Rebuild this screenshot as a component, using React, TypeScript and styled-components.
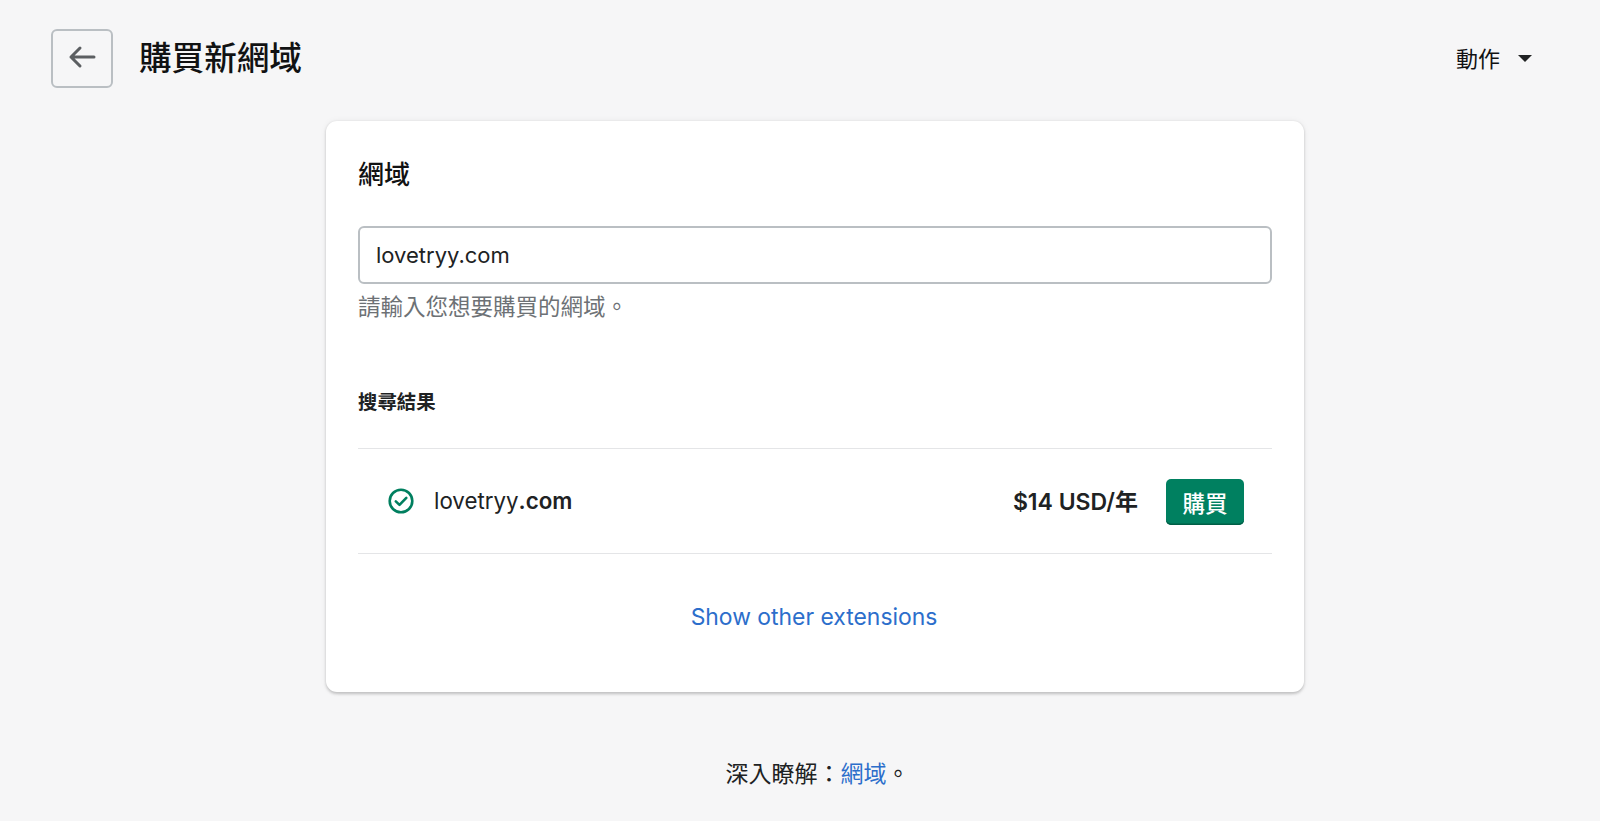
import React from "react";
import styled, { createGlobalStyle } from "styled-components";

const GlobalStyle = createGlobalStyle`
  html, body {
    margin: 0;
    padding: 0;
    background: #f6f6f7;
  }
  body {
    font-family: Inter, "Noto Sans CJK TC", sans-serif;
    color: #202223;
    overflow: hidden;
  }
`;

const Page = styled.div`
  height: 821px;
  display: flex;
  flex-direction: column;
  box-sizing: border-box;
  padding: 29px 21px 0 51px;
`;

const Header = styled.header`
  display: flex;
  align-items: center;
  height: 59px;
`;

const BackButton = styled.button`
  width: 62px;
  height: 59px;
  box-sizing: border-box;
  display: flex;
  align-items: center;
  justify-content: center;
  background: transparent;
  border: 2px solid #babfc3;
  border-radius: 6px;
  color: #5c5f62;
  padding: 0 0 3px 0;
`;

const Title = styled.h1`
  margin: 0 0 0 26px;
  font-size: 32.6px;
  line-height: 59px;
  font-weight: 500;
  color: #111213;
  flex: 1;
`;

const Actions = styled.div`
  display: flex;
  align-items: center;
  gap: 18px;
  font-size: 22px;
  color: #111213;
  margin-right: 47px;
  padding-bottom: 4px;
`;

const Caret = styled.span`
  width: 0;
  height: 0;
  border-left: 7px solid transparent;
  border-right: 7px solid transparent;
  border-top: 7px solid #202223;
  margin-top: 3px;
`;

const Card = styled.section`
  width: 978px;
  height: 571px;
  box-sizing: border-box;
  margin: 33px auto 0;
  padding: 0 32px;
  background: #fff;
  border-radius: 11px;
  box-shadow: 0 0 7px rgba(23, 24, 24, 0.05), 0 1.5px 3px rgba(0, 0, 0, 0.2);
`;

const CardTitle = styled.h2`
  margin: 0;
  padding-top: 35px;
  font-size: 26px;
  line-height: 38px;
  font-weight: 500;
  color: #111213;
`;

const DomainInput = styled.input`
  display: block;
  width: 100%;
  height: 58px;
  box-sizing: border-box;
  margin-top: 32px;
  padding: 0 16px;
  border: 2px solid #babfc3;
  border-radius: 6px;
  font: 22px Inter, "Noto Sans CJK TC", sans-serif;
  color: #202223;
  outline: none;
`;

const Hint = styled.p`
  margin: 7px 0 0;
  font-size: 22.5px;
  line-height: 32px;
  color: #6d7175;
`;

const SectionLabel = styled.h3`
  margin: 65px 0 0;
  font-size: 19.4px;
  line-height: 28px;
  font-weight: 600;
`;

const ResultRow = styled.div`
  display: flex;
  align-items: center;
  height: 104px;
  margin-top: 32px;
  padding: 0 28px 0 30px;
  border-top: 1.5px solid #e4e5e7;
  border-bottom: 1.5px solid #e4e5e7;
`;

const DomainName = styled.span`
  flex: 1;
  margin-left: 20px;
  font-size: 22.3px;
  padding-bottom: 2px;

  b {
    font-weight: 600;
  }
`;

const Price = styled.span`
  font-size: 23px;
  font-weight: 600;
  padding-bottom: 2px;
`;

const BuyButton = styled.button`
  width: 78px;
  height: 46px;
  margin: 2px 0 0 28px;
  padding: 0;
  background: #008060;
  border: 0;
  border-radius: 5px;
  box-shadow: inset 0 -1.5px 0 #005e46;
  color: #fff;
  font: 500 22.5px Inter, "Noto Sans CJK TC", sans-serif;
`;

const MoreLink = styled.div`
  margin-top: 47px;
  padding-right: 2px;
  text-align: center;
  font-size: 22.9px;
  line-height: 32px;
  color: #2c6ecb;
`;

const Footer = styled.footer`
  margin-top: 66px;
  padding-left: 5px;
  text-align: center;
  font-size: 23px;
  line-height: 32px;

  a {
    color: #2c6ecb;
    text-decoration: none;
  }
`;

export default function App() {
  return (
    <>
      <GlobalStyle />
      <Page>
        <Header>
          <BackButton aria-label="返回">
            <svg width="30" height="28" viewBox="0 0 30 28" fill="none">
              <path
                d="M27 14H4M13 5l-9 9 9 9"
                stroke="currentColor"
                strokeWidth="3"
                strokeLinecap="round"
                strokeLinejoin="round"
              />
            </svg>
          </BackButton>
          <Title>購買新網域</Title>
          <Actions>
            動作
            <Caret />
          </Actions>
        </Header>
        <Card>
          <CardTitle>網域</CardTitle>
          <DomainInput defaultValue="lovetryy.com" />
          <Hint>請輸入您想要購買的網域。</Hint>
          <SectionLabel>搜尋結果</SectionLabel>
          <ResultRow>
            <svg width="26" height="26" viewBox="0 0 26 26" fill="none">
              <circle cx="13" cy="13" r="11.3" stroke="#007f5f" strokeWidth="2.6" />
              <path
                d="M7.8 13.4l3.7 3.5 6.8-7"
                stroke="#007f5f"
                strokeWidth="2.6"
                strokeLinecap="round"
                strokeLinejoin="round"
              />
            </svg>
            <DomainName>
              lovetryy<b>.com</b>
            </DomainName>
            <Price>$14 USD/年</Price>
            <BuyButton>購買</BuyButton>
          </ResultRow>
          <MoreLink>Show other extensions</MoreLink>
        </Card>
        <Footer>
          深入瞭解：<a href="#domains">網域</a>。
        </Footer>
      </Page>
    </>
  );
}
